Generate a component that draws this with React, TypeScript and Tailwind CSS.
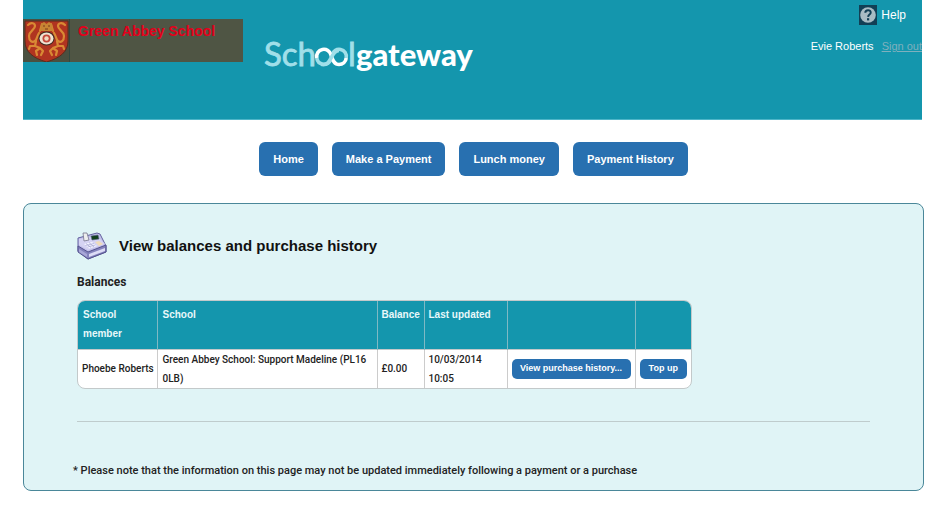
import React from 'react';

interface Balance {
  member: string;
  school: string;
  balance: string;
  updated: string;
}

const navItems = ['Home', 'Make a Payment', 'Lunch money', 'Payment History'];

const balances: Balance[] = [
  {
    member: 'Phoebe Roberts',
    school: 'Green Abbey School: Support Madeline (PL16 0LB)',
    balance: '£0.00',
    updated: '10/03/2014 10:05',
  },
];

const Crest: React.FC = () => (
  <svg className="h-full w-[47px] shrink-0" viewBox="0 0 47 43" aria-hidden="true">
    <rect width="47" height="43" fill="#4a5040" />
    <rect x="46" width="1" height="43" fill="#33483f" />
    <path d="M2 2H45V22C45 33 37 39 23.500 43C10 39 2 33 2 22Z" fill="#b03420" stroke="#5b2a1c" />
    {/* beasts on either side of the rose */}
    <g fill="none" stroke="#d98a34" strokeWidth="2.200" strokeLinecap="round" strokeLinejoin="round">
      <path d="M5 6C8 3 12 4 12 7C12 11 6 12 6 17C6 22 9 24 12 22C14 20 14 17 16 14" />
      <path d="M42 6C39 3 35 4 35 7C35 11 41 12 41 17C41 22 38 24 35 22C33 20 33 17 31 14" />
      <path d="M13 22L12 27L7 27L6 30M12 27L17 29L13 32L14 36M17 29L20 32L18 36" />
      <path d="M34 22L35 27L40 27L41 30M35 27L30 29L34 32L33 36M30 29L27 32L29 36" />
      <path d="M17 12L19 5M30 12L28 5" />
    </g>
    <path d="M18 5L21 3L23.500 5L26 3L29 5L30 12L17 12Z" fill="#c78433" />
    <path d="M20 7H22M25 7H27M22 10H25" stroke="#7a3a1c" />
    <ellipse cx="23.500" cy="19.500" rx="8" ry="7" fill="#3b2a20" />
    <ellipse cx="23.500" cy="19.500" rx="7" ry="6" fill="#efe2d2" />
    <circle cx="23.500" cy="19.500" r="4" fill="#c4473a" />
    <circle cx="23.500" cy="19.500" r="2.200" fill="#f0d9c0" />
  </svg>
);

const Logo: React.FC = () => (
  <svg
    className="h-[54px] w-[220px]"
    viewBox="0 0 220 54"
    fontFamily="Lato, sans-serif"
    role="img"
    aria-label="Schoolgateway"
  >
    <g fill="#a0dfe9" stroke="#a0dfe9" strokeWidth="0.800" fontSize="33">
      <text x="1" y="38">Sch</text>
      <text x="85" y="38">l</text>
    </g>
    {/* the two o's interlock, each half in its own shade */}
    <g fill="none" strokeWidth="3.600">
      <path d="M53.800 30A7.200 7.200 0 0 0 67.500 32" stroke="#a0dfe9" />
      <path d="M69 27A7.200 7.200 0 0 1 83.200 30" stroke="#a0dfe9" />
      <path d="M53.800 30A7.200 7.200 0 0 1 68 27C69.500 31 70.500 36.500 76 36.500A7.200 7.200 0 0 0 83.200 30" stroke="#ffffff" />
      <path d="M58 36.300C69 39 67 23 76 22.500" stroke="#a0dfe9" />
    </g>
    <text x="93" y="38" fontSize="31" fontWeight="900" fill="#ffffff">gateway</text>
  </svg>
);

const HelpIcon: React.FC = () => (
  <svg className="h-5 w-[18px]" viewBox="0 0 18 20" aria-hidden="true">
    <rect width="18" height="20" fill="#123f55" />
    <circle cx="9" cy="10" r="7.800" fill="#a9bcc4" />
    <path d="M6.300 7.800C6.300 4.200 11.900 4.300 11.700 7.700C11.600 9.600 9.200 9.500 9.100 11.900" fill="none" stroke="#123f55" strokeWidth="2" />
    <rect x="8" y="13.200" width="2.200" height="2.200" fill="#123f55" />
  </svg>
);

const CashRegister: React.FC = () => (
  <svg className="h-[28px] w-[30px]" viewBox="0 0 30 28" aria-hidden="true">
    <path d="M1 6L20 1L23 2L29 14V20L11 27L1 19Z" fill="#c3c1ea" stroke="#63619f" strokeLinejoin="round" />
    <path d="M1 14L11 20L29 13V20L11 27L1 20Z" fill="#8583bd" stroke="#55538f" strokeLinejoin="round" />
    <path d="M12 22L28 16V19L12 25Z" fill="#dddcf6" />
    <path d="M2 17L10 22V25L2 20Z" fill="#a9a7d8" />
    <path d="M2 7L20 4L28 12L11 18L2 13Z" fill="#d5d3f3" />
    <path d="M14 4L21 3L22 7L15 8Z" fill="#123f1d" stroke="#59618c" strokeWidth="0.600" />
    <path d="M6 1H10L12 8L7 9Z" fill="#eeeeee" stroke="#73748c" strokeWidth="0.800" />
    <path d="M7 12L15 10L20 14L12 16.500Z" fill="#f3f3ff" />
    <path d="M18 10L22 9L26 12L22 14Z" fill="#efdcb9" />
    <path d="M9 11.500L14 15.500M12 10.500L17 15M8.500 13.500L17 11.500M10.500 15L18.500 13" stroke="#9b9acb" strokeWidth="0.600" />
  </svg>
);

const RowButton: React.FC<{ children: React.ReactNode }> = ({ children }) => (
  <button className="block h-5 w-full rounded-[5px] bg-[#2870b0] text-center font-['Liberation_Sans',Arial,sans-serif] text-[9px] font-bold text-white hover:bg-[#1f5f99]">
    {children}
  </button>
);

export default function App() {
  return (
    <div className="min-h-screen bg-white pb-5 pl-[23px] pr-[17px] font-['Liberation_Sans',Arial,sans-serif] text-[#222222]">
      <header className="mr-0.5 flex h-[120px] items-start overflow-hidden border-b border-[#4db5c8] bg-[#1496ad]">
        <div className="mt-[19px] flex h-[43px] w-[220px] shrink-0 bg-[#4f5544]">
          <Crest />
          <p className="pl-2 pt-1 text-[14px] leading-4 font-bold text-[#e3001b]">Green Abbey School</p>
        </div>
        <div className="ml-5 mt-7 shrink-0">
          <Logo />
        </div>
        <div className="ml-auto flex flex-col items-end leading-4 text-white">
          <a href="#help" className="mr-4 mt-[5px] flex items-center gap-1 text-[12px]">
            <HelpIcon />
            Help
          </a>
          <p className="mt-[13px] flex gap-2 whitespace-nowrap text-[11px]">
            <span>Evie Roberts</span>
            <a href="#signout" className="text-[#7fb0bd] underline">Sign out</a>
          </p>
        </div>
      </header>

      <nav className="mt-[22px] flex justify-center gap-3.5">
        {navItems.map((item) => (
          <button
            key={item}
            className="h-[34px] rounded-md bg-[#2870b0] px-3.5 text-[11px] font-bold text-white hover:bg-[#1f5f99]"
          >
            {item}
          </button>
        ))}
      </nav>

      <main className="mt-[27px] rounded-lg border border-[#4a8799] bg-[#e0f4f6] px-[53px] pb-[11px] pt-[26px]">
        <h1 className="flex items-center gap-3 text-[15px] leading-8 font-bold text-[#111111]">
          <CashRegister />
          View balances and purchase history
        </h1>
        <h2 className="mt-3 font-[Roboto,Arial,sans-serif] text-[12px] leading-4 font-bold">Balances</h2>

        <div className="mt-2.5 w-[615px] overflow-hidden rounded-lg border border-[#c3c9ca] bg-white">
          <table className="w-full table-fixed text-left text-[10px] leading-[19px]">
            <colgroup>
              <col className="w-[79px]" />
              <col className="w-[220px]" />
              <col className="w-[47px]" />
              <col className="w-[83px]" />
              <col className="w-[128px]" />
              <col />
            </colgroup>
            <thead className="bg-[#1496ad] text-[#e8f8fa]">
              <tr className="h-12 divide-x divide-[#7fb9c4] border-b border-[#c3c9ca] align-top">
                <th className="px-[5px] pt-1">School member</th>
                <th className="px-[5px] pt-1">School</th>
                <th className="pl-1 pt-1">Balance</th>
                <th className="pl-1 pt-1">Last updated</th>
                <th aria-label="History" />
                <th aria-label="Top up" />
              </tr>
            </thead>
            <tbody className="font-[Roboto,Arial,sans-serif] font-medium">
              {balances.map((row) => (
                <tr key={row.member} className="h-[39px] divide-x divide-[#cccccc]">
                  <td className="whitespace-nowrap pl-1">{row.member}</td>
                  <td className="px-[5px]">{row.school}</td>
                  <td className="pl-1">{row.balance}</td>
                  <td className="pl-1 pr-6">{row.updated}</td>
                  <td className="px-1"><RowButton>View purchase history...</RowButton></td>
                  <td className="px-1"><RowButton>Top up</RowButton></td>
                </tr>
              ))}
            </tbody>
          </table>
        </div>

        <hr className="mt-8 border-[#bfcccd]" />
        <p className="-ml-1 mt-[41px] font-[Roboto,Arial,sans-serif] text-[11px] leading-4 font-medium">
          * Please note that the information on this page may not be updated immediately following a payment or a purchase
        </p>
      </main>
    </div>
  );
}
